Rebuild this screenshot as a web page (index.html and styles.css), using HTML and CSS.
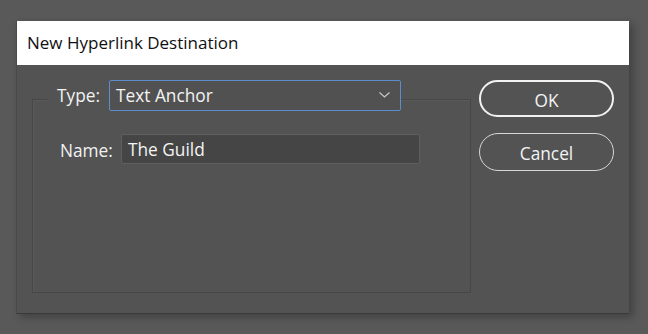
FILE: index.html
```html
<!DOCTYPE html>
<html lang="en">
<head>
<meta charset="utf-8">
<title>New Hyperlink Destination</title>
<link rel="stylesheet" href="styles.css">
</head>
<body>
<div class="dialog">
  <div class="titlebar">New Hyperlink Destination</div>
  <div class="content">
    <div class="left">
      <div class="type-row">
        <span class="label type-label">Type:</span>
        <div class="select">
          <span class="select-text">Text Anchor</span>
          <svg class="chevron" width="11" height="6" viewBox="0 0 11 6"><path d="M0.5 0.5 L5.5 5 L10.5 0.5" fill="none" stroke="#c8c8c8" stroke-width="1.2"/></svg>
        </div>
      </div>
      <div class="group">
        <div class="name-row">
          <span class="label name-label">Name:</span>
          <div class="input">The Guild</div>
        </div>
      </div>
    </div>
    <div class="buttons">
      <button class="btn btn-ok">OK</button>
      <button class="btn btn-cancel">Cancel</button>
    </div>
  </div>
</div>
</body>
</html>
```
FILE: styles.css
```css
html, body {
  margin: 0;
  padding: 0;
}
body {
  background: #595959;
  width: 648px;
  height: 334px;
  overflow: hidden;
  font-family: "Open Sans", "Noto Sans", sans-serif;
}
.dialog {
  margin: 21px 0 0 16px;
  width: 613px;
  height: 293px;
  background: #535353;
  box-sizing: border-box;
  border-left: 1px solid #4a4a4a;
  border-bottom: 1px solid #3a3a3a;
  box-shadow: 4px 3px 8px rgba(0, 0, 0, 0.28);
  display: flex;
  flex-direction: column;
}
.titlebar {
  height: 44px;
  background: #ffffff;
  color: #111111;
  font-size: 17px;
  line-height: 44px;
  padding-left: 10px;
  flex: none;
}
.content {
  flex: 1;
  display: flex;
  padding: 15px 15px 20px 15px;
  gap: 8px;
}
.left {
  width: 440px;
  display: flex;
  flex-direction: column;
}
.type-row {
  display: flex;
  align-items: center;
  height: 31px;
  padding-left: 15px;
  position: relative;
  z-index: 1;
}
.label {
  color: #f2f2f2;
  font-size: 17.3px;
}
.type-label {
  background: #535353;
  width: 62px;
  box-sizing: border-box;
  padding-left: 10px;
  line-height: 24px;
}
.select {
  width: 292px;
  height: 31px;
  box-sizing: border-box;
  border: 1px solid #5b8dcc;
  border-radius: 2px;
  background: #515151;
  display: flex;
  align-items: center;
  justify-content: space-between;
  padding: 0 10px 0 6px;
}
.select-text {
  color: #f4f4f4;
  font-size: 17.3px;
}
.chevron {
  display: block;
  margin-top: -2px;
}
.group {
  flex: 1;
  margin-top: -12px;
  border: 1px solid #474747;
  box-shadow: inset 1px 1px 0 #5a5a5a;
  padding-top: 34px;
}
.name-row {
  display: flex;
  align-items: center;
  padding-left: 27px;
}
.name-label {
  width: 61px;
  padding-top: 2px;
}
.input {
  width: 299px;
  height: 30px;
  box-sizing: border-box;
  background: #454545;
  border: 1px solid #5f5f5f;
  border-radius: 2px;
  color: #f4f4f4;
  font-size: 17.3px;
  line-height: 30px;
  padding-left: 6px;
}
.buttons {
  display: flex;
  flex-direction: column;
  gap: 16px;
}
.btn {
  width: 135px;
  font-family: inherit;
  font-size: 17.3px;
  color: #f4f4f4;
  background: transparent;
  box-sizing: border-box;
  padding: 3px 0 0 0;
  border-radius: 19px;
}
.btn-ok {
  height: 37px;
  border: 2px solid #f2f2f2;
}
.btn-cancel {
  height: 38px;
  border: 1px solid #d6d6d6;
}
```
